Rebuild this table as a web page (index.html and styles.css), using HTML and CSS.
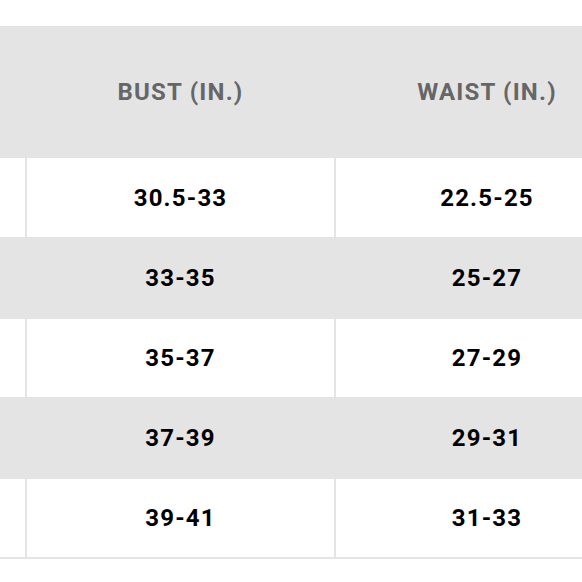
FILE: index.html
```html
<!DOCTYPE html>
<html>
<head>
<meta charset="utf-8">
<link rel="stylesheet" href="styles.css">
</head>
<body>
<div class="viewport">
  <table class="size-table">
    <colgroup>
      <col class="col-size">
      <col class="col-bust">
      <col class="col-waist">
    </colgroup>
    <thead>
      <tr>
        <th></th>
        <th>BUST (IN.)</th>
        <th>WAIST (IN.)</th>
      </tr>
    </thead>
    <tbody>
      <tr><td></td><td>30.5-33</td><td>22.5-25</td></tr>
      <tr class="alt"><td></td><td>33-35</td><td>25-27</td></tr>
      <tr><td></td><td>35-37</td><td>27-29</td></tr>
      <tr class="alt"><td></td><td>37-39</td><td>29-31</td></tr>
      <tr><td></td><td>39-41</td><td>31-33</td></tr>
    </tbody>
  </table>
</div>
</body>
</html>
```

FILE: styles.css
```css
html, body {
  margin: 0;
  padding: 0;
  background: #ffffff;
}

.viewport {
  width: 582px;
  height: 582px;
  overflow: hidden;
  padding-top: 26px;
  box-sizing: border-box;
}

.size-table {
  width: 920px;
  margin-left: -282px;
  border-collapse: collapse;
  table-layout: fixed;
  font-family: Roboto, "Liberation Sans", sans-serif;
  font-weight: 700;
  font-size: 24px;
  letter-spacing: 1.2px;
}

.col-size { width: 308px; }
.col-bust { width: 309px; }
.col-waist { width: 303px; }

.size-table th,
.size-table td {
  padding: 0;
  text-align: center;
  border-left: 2px solid #e4e4e4;
}

.size-table th:first-child,
.size-table td:first-child {
  border-left: none;
}

.size-table thead tr {
  background: #e4e4e4;
  height: 132px;
}

.size-table th {
  color: #666666;
}

.size-table tbody tr {
  height: 80px;
  border-bottom: 2px solid #e4e4e4;
}

.size-table td {
  color: #000000;
  height: 78px;
}

.size-table tr.alt {
  background: #e4e4e4;
}
```
